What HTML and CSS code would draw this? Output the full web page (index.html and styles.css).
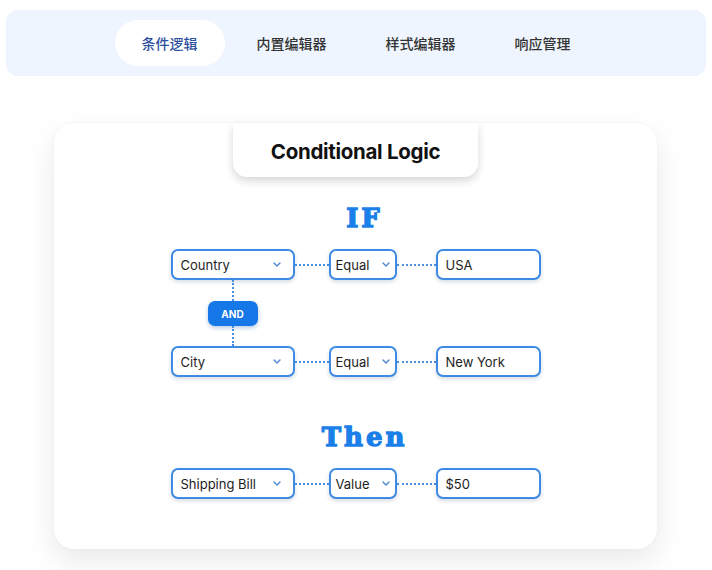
FILE: index.html
```html
<!DOCTYPE html>
<html lang="zh">
<head>
<meta charset="utf-8">
<title>Conditional Logic</title>
<link rel="stylesheet" href="styles.css">
</head>
<body>
<nav class="tabbar">
  <div class="tab active">条件逻辑</div>
  <div class="tab">内置编辑器</div>
  <div class="tab">样式编辑器</div>
  <div class="tab">响应管理</div>
</nav>

<section class="card">
  <div class="title">Conditional Logic</div>

  <div class="keyword kw-if">IF</div>

  <div class="row">
    <div class="field wide"><span>Country</span><svg class="chev" viewBox="0 0 8 5"><path d="M1 1l3 3 3-3"/></svg></div>
    <div class="link link-a"></div>
    <div class="field narrow"><span>Equal</span><svg class="chev" viewBox="0 0 8 5"><path d="M1 1l3 3 3-3"/></svg></div>
    <div class="link link-b"></div>
    <div class="field value"><span>USA</span></div>
  </div>

  <div class="joiner">
    <div class="vline top"></div>
    <div class="and">AND</div>
    <div class="vline bottom"></div>
  </div>

  <div class="row">
    <div class="field wide"><span>City</span><svg class="chev" viewBox="0 0 8 5"><path d="M1 1l3 3 3-3"/></svg></div>
    <div class="link link-a"></div>
    <div class="field narrow"><span>Equal</span><svg class="chev" viewBox="0 0 8 5"><path d="M1 1l3 3 3-3"/></svg></div>
    <div class="link link-b"></div>
    <div class="field value"><span>New York</span></div>
  </div>

  <div class="keyword kw-then">Then</div>

  <div class="row">
    <div class="field wide"><span>Shipping Bill</span><svg class="chev" viewBox="0 0 8 5"><path d="M1 1l3 3 3-3"/></svg></div>
    <div class="link link-a"></div>
    <div class="field narrow"><span>Value</span><svg class="chev" viewBox="0 0 8 5"><path d="M1 1l3 3 3-3"/></svg></div>
    <div class="link link-b"></div>
    <div class="field value"><span>$50</span></div>
  </div>
</section>
</body>
</html>
```

FILE: styles.css
```css
* { box-sizing: border-box; }

html, body {
  margin: 0;
  padding: 0;
  background: #ffffff;
}

body {
  width: 712px;
  height: 570px;
  overflow: hidden;
  font-family: "Inter", "Noto Sans", "Noto Sans CJK SC", sans-serif;
}

.tabbar {
  margin: 10px 6px 0;
  height: 66px;
  background: #eef5fe;
  border-radius: 12px;
  display: flex;
  justify-content: center;
  align-items: center;
  gap: 5px;
}

.tab {
  height: 46px;
  padding: 0 27px;
  display: flex;
  align-items: center;
  border-radius: 23px;
  font-family: "Noto Sans CJK SC", "Noto Sans", sans-serif;
  font-size: 14px;
  font-weight: 500;
  color: #333333;
}

.tab.active {
  background: #ffffff;
  color: #2d4f9e;
}

.card {
  margin: 47px 0 0 54px;
  width: 603px;
  height: 426px;
  background: #ffffff;
  border-radius: 20px;
  box-shadow: 0 12px 30px rgba(0, 0, 0, 0.09), 0 0 3px rgba(0, 0, 0, 0.04);
  display: flex;
  flex-direction: column;
  align-items: center;
}

.title {
  width: 245px;
  height: 54px;
  padding-top: 3px;
  background: #ffffff;
  border-radius: 0 0 14px 14px;
  box-shadow: 0 4px 8px rgba(0, 0, 0, 0.16);
  display: flex;
  align-items: center;
  justify-content: center;
  font-family: "Inter", sans-serif;
  font-weight: 700;
  font-size: 20.5px;
  letter-spacing: -0.3px;
  color: #111111;
}

.keyword {
  font-family: "DejaVu Serif", serif;
  font-weight: 700;
  font-size: 26px;
  line-height: 32px;
  height: 32px;
  letter-spacing: 3px;
  color: #1a7fe8;
  -webkit-text-stroke: 1.3px #1a7fe8;
  padding-left: 3px;
  margin-left: 15px;
}

.kw-if { margin-top: 25px; margin-bottom: 15px; }
.kw-then { margin-top: 44px; margin-bottom: 15px; }

.row {
  display: flex;
  align-items: center;
  width: 370px;
}

.field {
  height: 31px;
  border: 2px solid #3f8ae2;
  border-radius: 7px;
  background: #ffffff;
  box-shadow: 0 2px 4px rgba(30, 60, 110, 0.18);
  display: flex;
  align-items: center;
  justify-content: space-between;
  font-size: 13px;
  color: #1e1e1e;
}

.field.wide { width: 124px; padding: 0 12px 0 8px; }
.field.narrow { width: 68px; padding: 0 5px 0 5px; }
.field.value { width: 105px; padding: 0 8px; }

.chev {
  width: 8px;
  height: 5px;
  fill: none;
  stroke: #4a86d4;
  stroke-width: 1.4;
  stroke-linecap: round;
  stroke-linejoin: round;
}

.link {
  height: 0;
  border-top: 2px dotted #4a8ee0;
}
.link-a { width: 34px; }
.link-b { width: 39px; }

.joiner {
  width: 370px;
  display: flex;
  flex-direction: column;
  align-items: flex-start;
  padding-left: 37px;
}

.vline {
  width: 0;
  border-left: 2px dotted #4a8ee0;
  margin-left: 24px;
}
.vline.top { height: 21px; }
.vline.bottom { height: 20px; }

.and {
  width: 50px;
  height: 25px;
  background: #1677e8;
  border-radius: 7px;
  box-shadow: 0 2px 4px rgba(20, 80, 170, 0.3);
  color: #ffffff;
  font-size: 10px;
  font-weight: 700;
  display: flex;
  align-items: center;
  justify-content: center;
}
```
